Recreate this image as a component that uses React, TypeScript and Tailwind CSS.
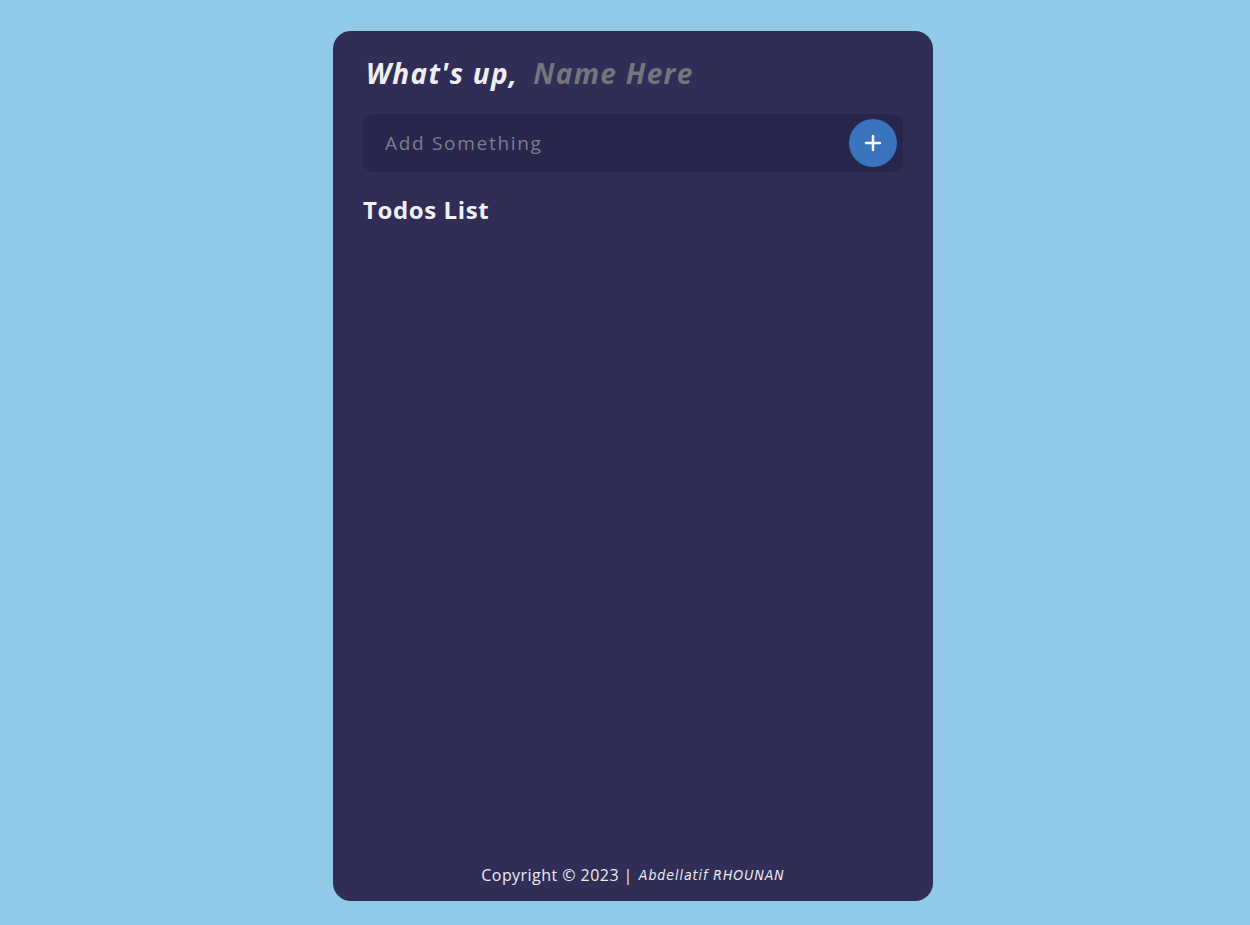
import { Plus } from 'lucide-react';

const App = () => {
  return (
    <div
      className="flex min-h-screen w-full justify-center bg-[#91cae8] pt-[31px] pb-[24px] pl-[16px]"
      style={{ fontFamily: '"Open Sans", "Noto Sans", sans-serif' }}
    >
      <main className="flex h-[870px] w-[600px] flex-col rounded-[18px] bg-[#302e56] px-[30px] pt-[20px] pb-[14px]">
        <h1 className="flex items-baseline gap-[15px] pl-[3px] text-[28px] font-bold italic leading-[44px] tracking-[1.3px]">
          <span className="text-[#efeef4]">What's up,</span>
          <span className="text-[#76757d]">Name Here</span>
        </h1>

        <form
          className="mt-[19px] flex h-[58px] items-center rounded-[10px] bg-[#27264c] pl-[22px] pr-[6px]"
          onSubmit={(e) => e.preventDefault()}
        >
          <input
            type="text"
            placeholder="Add Something"
            className="flex-1 bg-transparent text-[19px] tracking-[1.7px] text-[#e6e6ee] placeholder:text-[#7e7d8e] outline-none"
          />
          <button
            type="submit"
            className="flex h-[48px] w-[48px] items-center justify-center rounded-full bg-[#3a74bd] text-white"
          >
            <Plus size={24} strokeWidth={2.5} />
          </button>
        </form>

        <h2 className="mt-[22px] text-[24px] font-bold leading-[32px] tracking-[0.6px] text-[#f1f0f6]">Todos List</h2>

        <footer className="mt-auto flex items-center justify-center gap-[6px] text-[16px] text-[#ecebf2]">
          <span className="tracking-[0.45px]">Copyright © 2023 |</span>
          <span
            className="text-[14px] italic tracking-[0.95px]"
            style={{ fontFamily: '"DejaVu Sans Condensed", "DejaVu Sans", sans-serif' }}
          >
            Abdellatif RHOUNAN
          </span>
        </footer>
      </main>
    </div>
  );
};

export default App;
